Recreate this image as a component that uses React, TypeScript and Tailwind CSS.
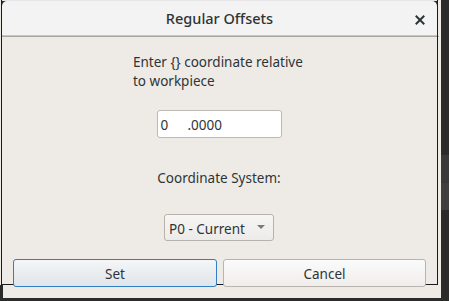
import React from "react";

export default function App() {
  const font = { fontFamily: '"Noto Sans", "Open Sans", sans-serif' };
  return (
    <div className="w-[449px] h-[301px] bg-[#2b2b2b] flex flex-row overflow-hidden" style={font}>
      <div className="relative w-[441px] h-[298px] bg-[#eeebe7] flex flex-col">
        {/* window frame outline */}
        <div className="absolute left-px top-0 w-[437px] h-[285px] border-l border-r border-b border-[#1a1a1a] pointer-events-none z-20" />
        <div className="absolute left-0 top-[285px] w-[3px] h-[13px] bg-[#2b2b2b]" />
        <div className="h-px bg-[#e6e6e6]" />
        <div className="mx-[2px] w-[435px] bg-[#2b2b2b]">
          <div className="h-[35px] bg-[#f3f3f3] rounded-t-[5px] border-b border-[#c9c6c2] flex items-center justify-center relative">
            <span className="text-[14.5px] font-medium text-[#2e3436] leading-none">Regular Offsets</span>
            <div className="absolute right-[12px] top-[14px] w-[10px] h-[10px]">
              <svg width="10" height="10" viewBox="0 0 10 10">
                <path d="M1.5 1.5 L8.5 8.5 M8.5 1.5 L1.5 8.5" stroke="#2e3436" strokeWidth="2" strokeLinecap="square" />
              </svg>
            </div>
          </div>
        </div>
        <div className="h-px bg-[#a9a6a1] mx-[2px]" />
        <div className="flex flex-col items-center w-[438px] text-[#2e3436]">
          <div className="mt-[16px] text-[13.5px] leading-[19px] text-left w-[172px] whitespace-nowrap">
            Enter {"{}"} coordinate relative
            <br />
            to workpiece
          </div>
          <div className="mt-[19px] w-[125px] h-[28px] bg-white border border-[#bfb9b2] rounded-[3px] flex items-center px-[3px] pt-[3px] text-[13.5px]">
            <span className="w-[27px]">0</span>
            <span>.0000</span>
          </div>
          <div className="mt-[30px] text-[13.5px] leading-[20px]">Coordinate System:</div>
          <div className="mt-[26px] w-[110px] h-[27px] border border-[#b8b2ab] rounded-[3px] bg-gradient-to-b from-[#f7f6f5] to-[#edebe9] flex items-center pl-[4px] pr-[8px] text-[13.5px]">
            <span className="flex-1 pt-[3px]">P0 - Current</span>
            <svg width="8" height="5" viewBox="0 0 8 5">
              <path d="M0 0 L8 0 L4 4 Z" fill="#7b7b7b" />
            </svg>
          </div>
          <div className="mt-[18px] w-full flex flex-row gap-[6px] pl-[13px] relative z-30">
            <div className="w-[204px] h-[28px] rounded-[3px] border border-[#2f7fc2] bg-gradient-to-b from-[#f4f6f8] to-[#e0e5e9] flex items-center justify-center pt-[2px] text-[13.5px]">
              Set
            </div>
            <div className="w-[203px] h-[28px] rounded-[3px] border border-[#b9b4ae] bg-gradient-to-b from-[#fbfbfb] to-[#f0eeec] flex items-center justify-center pt-[2px] text-[13.5px]">
              Cancel
            </div>
          </div>
        </div>
      </div>
      <div className="flex-1 flex flex-col">
        <div className="h-[155px] bg-[#2b2b2b]" />
        <div className="h-[28px] bg-[#393939]" />
        <div className="h-[27px] bg-[#3f3f3f]" />
        <div className="flex-1 bg-[#2b2b2b]" />
      </div>
    </div>
  );
}
